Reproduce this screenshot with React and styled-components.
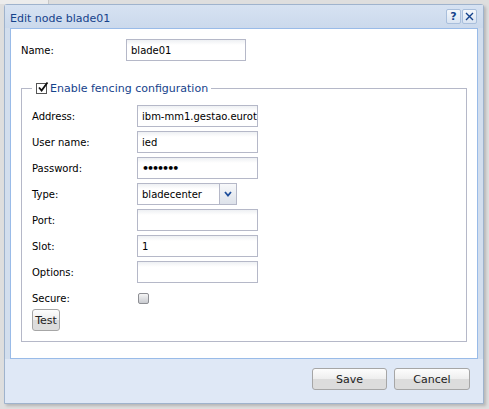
import styled, { createGlobalStyle } from 'styled-components'

const GlobalStyle = createGlobalStyle`
  html, body {
    margin: 0;
    padding: 0;
    background: #dedede;
    font-family: "DejaVu Sans", Verdana, sans-serif;
  }
`

const Desktop = styled.div`
  position: relative;
  width: 489px;
  height: 409px;
  overflow: hidden;
  background: #dedede;
`

const BackTab = styled.div`
  height: 4px;
  width: 48px;
  background: #ececec;
  border-right: 1px solid #c8c8c8;
`

const Window = styled.div`
  position: absolute;
  left: 4px;
  top: 4px;
  width: 478px;
  height: 398px;
  border: 1px solid #9fb3cd;
  border-radius: 3px 3px 0 0;
  background: #d2deee;
  box-shadow: 2px 2px 3px rgba(0, 0, 0, 0.18);
  display: flex;
  flex-direction: column;
`

const Header = styled.div`
  height: 23px;
  display: flex;
  align-items: center;
  padding: 0 6px 0 5px;
  background: linear-gradient(#d6e2f2, #cbd9ec);
`

const Title = styled.div`
  flex: 1;
  color: #15428b;
  font-size: 11px;
  padding-top: 3px;
`

const Tools = styled.div`
  display: flex;
  gap: 1px;
`

const ToolButton = styled.div`
  width: 13px;
  height: 13px;
  border: 1px solid #a9bfdc;
  border-radius: 2px;
  background: linear-gradient(#f4f7fb, #d9e4f2);
  color: #15428b;
  display: flex;
  align-items: center;
  justify-content: center;
  font-size: 11px;
  font-weight: bold;
  line-height: 1;
`

const Body = styled.div`
  margin: 0 5px;
  height: 309px;
  background: #fff;
  border: 1px solid #99bbe8;
  padding: 10px;
  display: flex;
  flex-direction: column;
`

const Row = styled.div`
  display: flex;
  align-items: flex-start;
  height: 22px;
  margin-bottom: ${({ $gap }) => ($gap != null ? $gap : 4)}px;
`

const Label = styled.div`
  width: 105px;
  flex-shrink: 0;
  font-size: 10px;
  color: #000;
  padding-top: 6px;
  line-height: 12px;
`

const TextInput = styled.div`
  box-sizing: border-box;
  width: ${({ $w }) => $w}px;
  height: 22px;
  border: 1px solid #b5b8c8;
  background: #fff linear-gradient(#eef0f3, #fff 5px);
  font-size: 10px;
  padding: 0 4px;
  display: flex;
  align-items: center;
  color: #000;
  white-space: nowrap;
  overflow: hidden;
`

const Dots = styled.span`
  font-size: 11px;
  font-weight: bold;
  letter-spacing: -2px;
  padding-top: 1px;
`

const Combo = styled.div`
  display: flex;
  width: 100px;
  height: 22px;
`

const ComboText = styled(TextInput)`
  flex: 1;
  border-right: none;
`

const Trigger = styled.div`
  width: 18px;
  height: 22px;
  box-sizing: border-box;
  border: 1px solid #b5b8c8;
  background: linear-gradient(#f7f8fa, #dde2ea);
  display: flex;
  align-items: center;
  justify-content: center;
`

const Fieldset = styled.fieldset`
  margin: 21px 0 0 0;
  padding: 10px 10px 10px 10px;
  border: 1px solid #b5b8c8;
  min-width: 0;
`

const Legend = styled.legend`
  display: flex;
  align-items: center;
  gap: 3px;
  padding: 0 3px 0 4px;
  margin-left: 0;
  color: #15428b;
  font-size: 11px;
`

const CheckBox = styled.span`
  box-sizing: border-box;
  width: 11px;
  height: 11px;
  border: 1px solid #555;
  background: #fff;
  display: inline-flex;
  position: relative;
`

const SecureBox = styled.div`
  box-sizing: border-box;
  width: 11px;
  height: 11px;
  margin: 6px 0 0 1px;
  border: 1px solid #8e8f94;
  border-radius: 2px;
  background: linear-gradient(#f5f5f5, #c9cbd0);
`

const Button = styled.div`
  box-sizing: border-box;
  width: ${({ $w }) => $w}px;
  height: 22px;
  border: 1px solid #a6a6a6;
  border-radius: 3px;
  background: linear-gradient(#fdfdfd 0%, #eeeeee 48%, #dcdcdc 52%, #dcdcdc 100%);
  font-size: 11px;
  color: #222;
  display: flex;
  align-items: center;
  justify-content: center;
  line-height: 1;
`

const Footer = styled.div`
  flex: 1;
  display: flex;
  justify-content: flex-end;
  align-items: flex-start;
  gap: 7px;
  padding: 9px 13px 0 0;
  background: #dfe8f6;
`

const Check = () => (
  <svg width="12" height="12" viewBox="0 0 12 12" style={{ position: 'absolute', left: 0, top: -3 }}>
    <path d="M2 6.5 L4.6 9.5 L10.5 1.5" stroke="#111" strokeWidth="1.8" fill="none" />
  </svg>
)

const Chevron = () => (
  <svg width="8" height="6" viewBox="0 0 8 6">
    <path d="M1 1 L4 4.5 L7 1" stroke="#1f4f9c" strokeWidth="1.8" fill="none" />
  </svg>
)

const CloseGlyph = () => (
  <svg width="9" height="9" viewBox="0 0 9 9">
    <path d="M1 1 L8 8 M8 1 L1 8" stroke="#15428b" strokeWidth="1.4" fill="none" />
  </svg>
)

const FIELDS = [
  { label: 'Address:', value: 'ibm-mm1.gestao.eurotux.com' },
  { label: 'User name:', value: 'ied' },
  { label: 'Password:', password: true },
  { label: 'Type:', combo: 'bladecenter' },
  { label: 'Port:', value: '' },
  { label: 'Slot:', value: '1' },
  { label: 'Options:', value: '' },
]

const App = () => (
  <Desktop>
    <GlobalStyle />
    <BackTab />
    <Window>
      <Header>
        <Title>Edit node blade01</Title>
        <Tools>
          <ToolButton>?</ToolButton>
          <ToolButton>
            <CloseGlyph />
          </ToolButton>
        </Tools>
      </Header>
      <Body>
        <Row $gap={0}>
          <Label>Name:</Label>
          <TextInput $w={120}>blade01</TextInput>
        </Row>
        <Fieldset>
          <Legend>
            <CheckBox>
              <Check />
            </CheckBox>
            Enable fencing configuration
          </Legend>
          {FIELDS.map((f) => (
            <Row key={f.label}>
              <Label>{f.label}</Label>
              {f.combo ? (
                <Combo>
                  <ComboText>{f.combo}</ComboText>
                  <Trigger>
                    <Chevron />
                  </Trigger>
                </Combo>
              ) : (
                <TextInput $w={121}>
                  {f.password ? <Dots>•••••••</Dots> : f.value}
                </TextInput>
              )}
            </Row>
          ))}
          <Row $gap={0}>
            <Label>Secure:</Label>
            <SecureBox />
          </Row>
          <Button $w={28}>Test</Button>
        </Fieldset>
      </Body>
      <Footer>
        <Button $w={75}>Save</Button>
        <Button $w={76}>Cancel</Button>
      </Footer>
    </Window>
  </Desktop>
)

export default App
